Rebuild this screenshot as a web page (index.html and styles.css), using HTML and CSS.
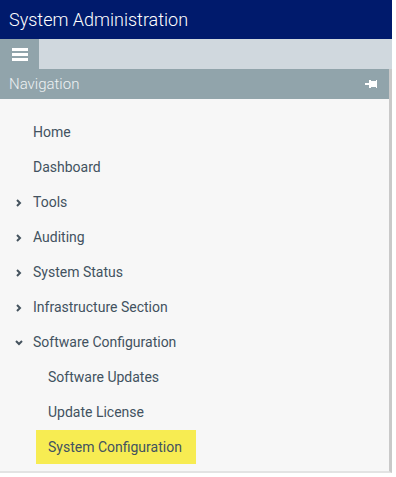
FILE: index.html
```html
<!DOCTYPE html>
<html lang="en">
<head>
    <meta charset="UTF-8">
    <meta name="viewport" content="width=device-width, initial-scale=1.0">
    <title>System Administration</title>
    <link rel="stylesheet" href="styles.css">
</head>
<body>
    <div class="app">
        <header class="topbar">System Administration</header>

        <div class="toolbar">
            <button class="menu-btn" aria-label="Menu">
                <span></span><span></span><span></span>
            </button>
        </div>

        <div class="nav-panel">
            <div class="nav-header">
                <span>Navigation</span>
                <svg class="pin" width="12" height="10" viewBox="0 0 12 10">
                    <rect x="0" y="4" width="4" height="2" fill="#fff"/>
                    <rect x="4" y="1" width="2" height="8" fill="#fff"/>
                    <rect x="6" y="2" width="5" height="6" fill="#fff"/>
                    <rect x="11" y="1" width="1" height="8" fill="#fff"/>
                </svg>
            </div>

            <ul class="nav-list">
                <li class="nav-item">Home</li>
                <li class="nav-item">Dashboard</li>
                <li class="nav-item has-children">
                    <svg class="chev" width="6" height="8" viewBox="0 0 6 8"><path d="M1 1 L4 4 L1 7" fill="none" stroke="#45535e" stroke-width="2"/></svg>Tools
                </li>
                <li class="nav-item has-children">
                    <svg class="chev" width="6" height="8" viewBox="0 0 6 8"><path d="M1 1 L4 4 L1 7" fill="none" stroke="#45535e" stroke-width="2"/></svg>Auditing
                </li>
                <li class="nav-item has-children">
                    <svg class="chev" width="6" height="8" viewBox="0 0 6 8"><path d="M1 1 L4 4 L1 7" fill="none" stroke="#45535e" stroke-width="2"/></svg>System Status
                </li>
                <li class="nav-item has-children">
                    <svg class="chev" width="6" height="8" viewBox="0 0 6 8"><path d="M1 1 L4 4 L1 7" fill="none" stroke="#45535e" stroke-width="2"/></svg>Infrastructure Section
                </li>
                <li class="nav-item has-children open">
                    <svg class="chev" width="8" height="6" viewBox="0 0 8 6"><path d="M1 1 L4 4 L7 1" fill="none" stroke="#45535e" stroke-width="2"/></svg>Software Configuration
                </li>
                <li class="nav-item child">Software Updates</li>
                <li class="nav-item child">Update License</li>
                <li class="nav-item child selected"><span class="highlight">System Configuration</span></li>
            </ul>
        </div>
    </div>
</body>
</html>
```

FILE: styles.css
```css
body {
    margin: 0;
    background: #fff;
    font-family: Roboto, "Liberation Sans", sans-serif;
}
.app {
    width: 392px;
}
.topbar {
    height: 39px;
    background-color: #001a6c;
    color: #fff;
    font-size: 18px;
    font-weight: 300;
    line-height: 39px;
    padding-left: 9px;
}
.toolbar {
    height: 30px;
    background-color: #d0d8de;
}
.menu-btn {
    width: 39px;
    height: 30px;
    border: none;
    padding: 0;
    background-color: #91a4ab;
    display: flex;
    flex-direction: column;
    align-items: center;
    justify-content: center;
    gap: 2px;
    cursor: pointer;
}
.menu-btn span {
    display: block;
    width: 16px;
    height: 3px;
    background: #fff;
}
.nav-panel {
    width: 389px;
    border-right: 3px solid #c9c9c9;
    border-bottom: 2px solid #e3e3e3;
    background-color: #f7f7f7;
}
.nav-header {
    height: 30px;
    background-color: #91a4ab;
    color: #eef2f3;
    font-size: 15px;
    font-weight: 300;
    display: flex;
    align-items: center;
    justify-content: space-between;
    padding: 0 12px 0 9px;
}
.pin {
    display: block;
}
.nav-list {
    list-style: none;
    margin: 0;
    padding: 16px 0 6px 0;
}
.nav-item {
    position: relative;
    height: 35px;
    line-height: 35px;
    padding-left: 33px;
    font-size: 14px;
    color: #425260;
}
.chev {
    position: absolute;
    left: 16px;
    top: 14px;
}
.open .chev {
    left: 15px;
    top: 15px;
}
.child {
    padding-left: 48px;
}
.child.selected {
    padding-left: 36px;
}
.highlight {
    display: inline-block;
    background-color: #f7ec52;
    padding: 0 14px 0 12px;
    line-height: 34px;
}
```
